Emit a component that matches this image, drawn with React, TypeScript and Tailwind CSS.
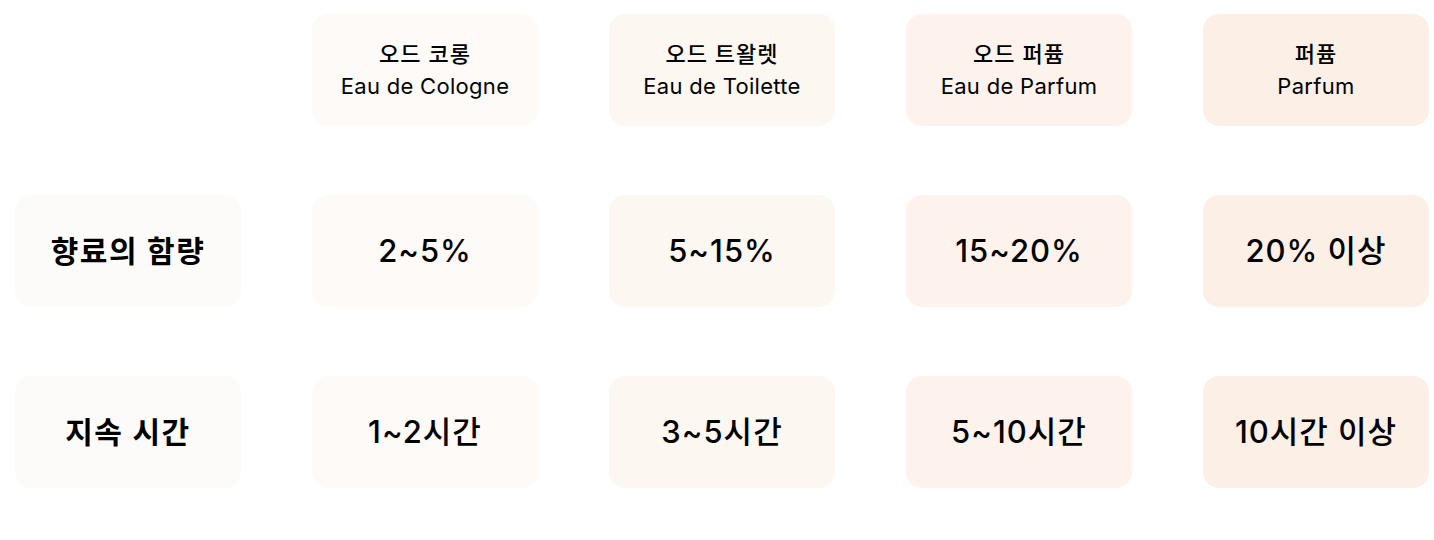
const headers = [
  { ko: "오드 코롱", en: "Eau de Cologne", bg: "bg-[#fefaf7]" },
  { ko: "오드 트왈렛", en: "Eau de Toilette", bg: "bg-[#fdf7f2]" },
  { ko: "오드 퍼퓸", en: "Eau de Parfum", bg: "bg-[#fdf3ec]" },
  { ko: "퍼퓸", en: "Parfum", bg: "bg-[#fcefe6]" },
]

const rows = [
  { label: "향료의 함량", values: ["2~5%", "5~15%", "15~20%", "20% 이상"] },
  { label: "지속 시간", values: ["1~2시간", "3~5시간", "5~10시간", "10시간 이상"] },
]

export default function App() {
  return (
    <div
      className="min-h-[540px] bg-white pl-[15px] pt-[14px] text-black"
      style={{ fontFamily: 'Inter, "Noto Sans CJK KR", sans-serif' }}
    >
      <div className="grid grid-cols-[repeat(5,226px)] gap-x-[71px] gap-y-[69px]">
        {/* header row */}
        <div />
        {headers.map((h) => (
          <div
            key={h.en}
            className={`${h.bg} h-[112px] rounded-2xl flex flex-col items-center justify-center text-[22px] leading-[32px]`}
          >
            <span className="font-medium tracking-[1px]">{h.ko}</span>
            <span className="tracking-[0.3px]">{h.en}</span>
          </div>
        ))}

        {rows.map((row) => (
          <>
            <div
              key={row.label}
              className="bg-[#fdfbfa] h-[112px] rounded-2xl flex items-center justify-center text-[30px] font-semibold tracking-[1.5px]"
            >
              {row.label}
            </div>
            {row.values.map((v, i) => (
              <div
                key={v}
                className={`${headers[i].bg} h-[112px] rounded-2xl flex items-center justify-center text-[31px] font-medium tracking-[1px]`}
              >
                {v}
              </div>
            ))}
          </>
        ))}
      </div>
    </div>
  )
}
